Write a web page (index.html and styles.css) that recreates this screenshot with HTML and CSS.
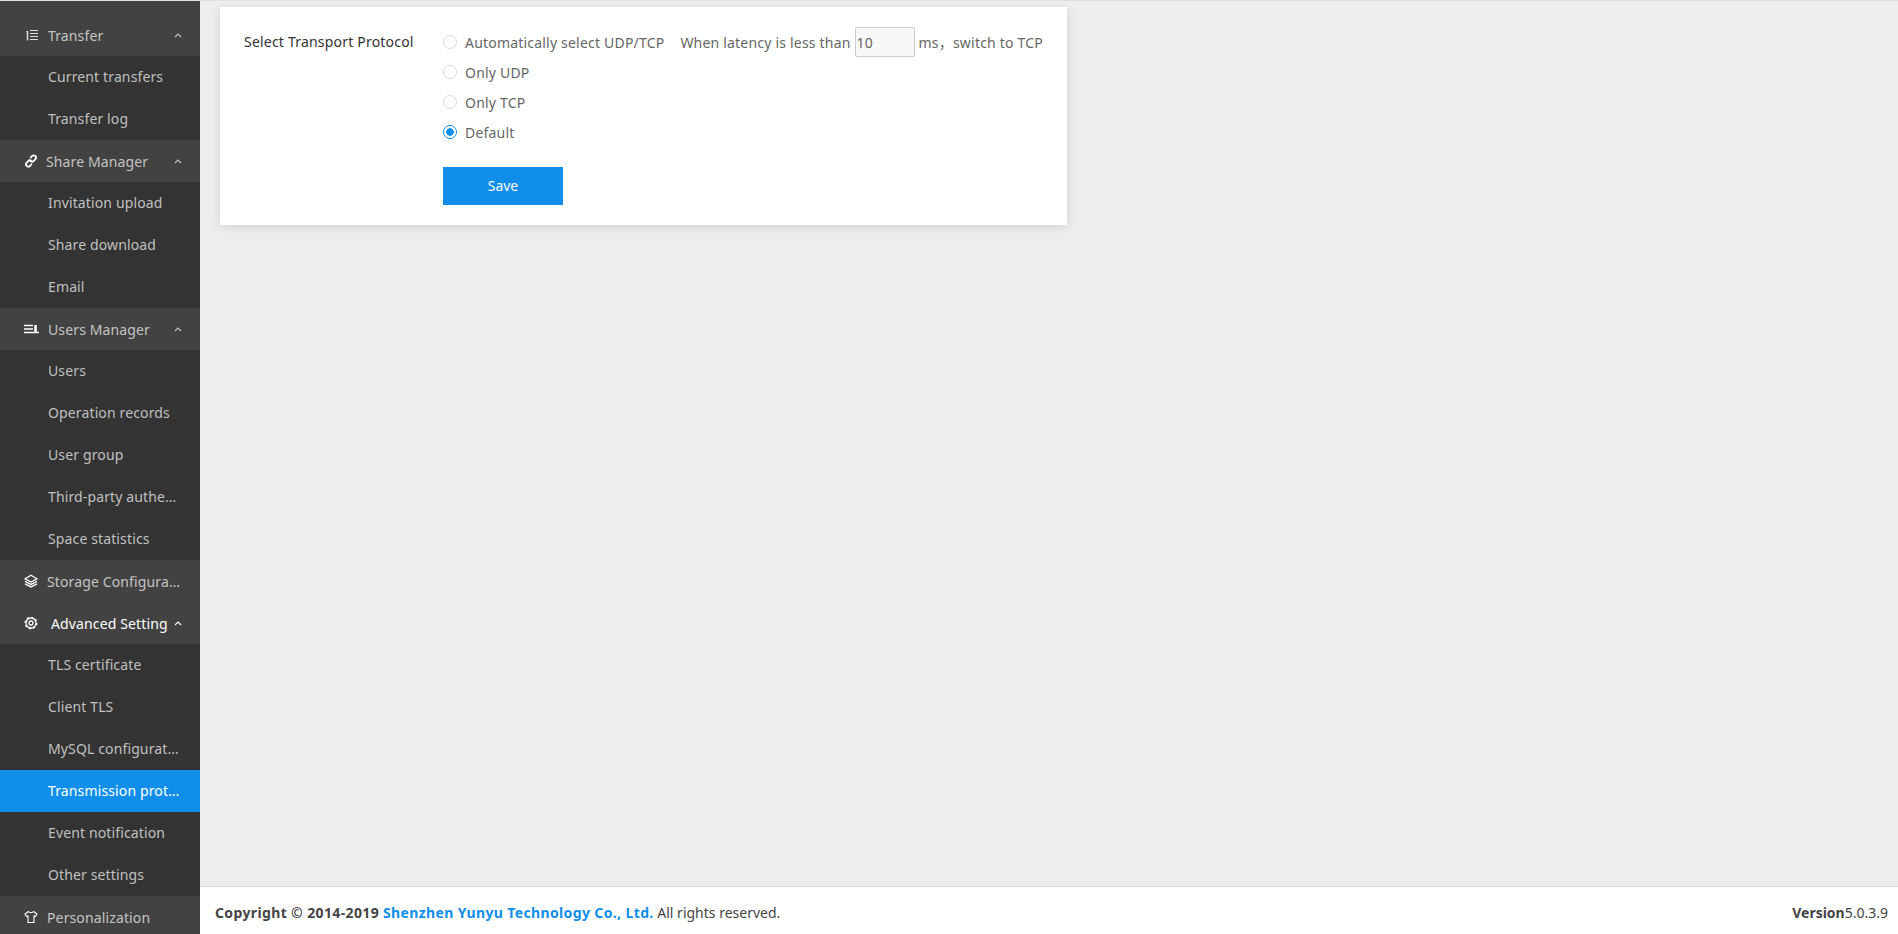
FILE: index.html
```html
<!DOCTYPE html>
<html lang="en">
<head>
<meta charset="utf-8">
<title>Transmission protocol</title>
<link rel="stylesheet" href="styles.css">
</head>
<body>
<div class="topline"></div>
<div class="layout">
  <aside class="sidebar">
    <div class="head first">
      <svg class="icon ic-transfer" viewBox="0 0 12 14"><path d="M1.500 3v9.500" stroke-width="1.500"/><path d="M0 4.500l1.500-1.500M4 2.500h8M4 5.500h8M4 8.500h8M4 11.500h8" stroke-width="1"/></svg>
      <span class="label">Transfer</span><svg class="chev" viewBox="0 0 8 5"><path d="M1 4l3-3 3 3"/></svg>
    </div>
    <a class="item">Current transfers</a>
    <a class="item">Transfer log</a>
    <div class="head">
      <svg class="icon ic-share" viewBox="0 0 14 14"><path d="M6.200 4.200l1.800-2a2.300 2.300 0 0 1 3.800 2.500L9.700 7a2.200 2.200 0 0 1-3.100 0" stroke-width="1.800"/><path d="M7.800 9.800l-1.800 2a2.300 2.300 0 0 1-3.800-2.500L4.300 7a2.200 2.200 0 0 1 3.100 0" stroke-width="1.800"/></svg>
      <span class="label">Share Manager</span><svg class="chev" viewBox="0 0 8 5"><path d="M1 4l3-3 3 3"/></svg>
    </div>
    <a class="item">Invitation upload</a>
    <a class="item">Share download</a>
    <a class="item">Email</a>
    <div class="head">
      <svg class="icon ic-users" viewBox="0 0 16 14"><path d="M0 3.500h9M0 7h9M0 10.500h15" stroke-width="1.600"/><path d="M11.500 3v7" stroke-width="2.600"/></svg>
      <span class="label">Users Manager</span><svg class="chev" viewBox="0 0 8 5"><path d="M1 4l3-3 3 3"/></svg>
    </div>
    <a class="item">Users</a>
    <a class="item">Operation records</a>
    <a class="item">User group</a>
    <a class="item">Third-party authentication</a>
    <a class="item">Space statistics</a>
    <div class="head">
      <svg class="icon ic-storage" viewBox="0 0 14 14"><path d="M7 1.200L13 4.800 7 8 1 4.800z" stroke-width="1.300"/><path d="M1 7.400L7 10.400 13 7.400M1 9.900L7 12.900 13 9.900" stroke-width="1.300"/></svg>
      <span class="label">Storage Configuration</span>
    </div>
    <div class="head open">
      <svg class="icon ic-gear" viewBox="0 0 14 14"><circle cx="7" cy="7" r="5" stroke-width="1.300"/><circle class="teeth" cx="7" cy="7" r="5.900" stroke-width="1.200" pathLength="16"/><circle cx="7" cy="7" r="2" stroke-width="1.300"/></svg>
      <span class="label">Advanced Setting</span><svg class="chev" viewBox="0 0 8 5"><path d="M1 4l3-3 3 3"/></svg>
    </div>
    <a class="item">TLS certificate</a>
    <a class="item">Client TLS</a>
    <a class="item">MySQL configuration</a>
    <a class="item active">Transmission protocol</a>
    <a class="item">Event notification</a>
    <a class="item">Other settings</a>
    <div class="head">
      <svg class="icon ic-tee" viewBox="0 0 14 14"><path d="M4.500 1.500L1 4l1.500 2.500L4 5.800V12.500h6V5.800l1.500.7L13 4 9.500 1.500C8.500 3 5.500 3 4.500 1.500z" stroke-width="1.100" stroke-linejoin="round"/></svg>
      <span class="label">Personalization</span>
    </div>
  </aside>
  <div class="main">
    <div class="content">
      <section class="card">
        <div class="field-label">Select Transport Protocol</div>
        <div class="field">
          <div class="option">
            <span class="radio"></span><span class="option-text">Automatically select UDP/TCP</span>
            <span class="latency">When latency is less than</span>
            <input class="latency-input" type="text" value="10">
            <span class="unit">ms，switch to TCP</span>
          </div>
          <div class="option"><span class="radio"></span><span class="option-text">Only UDP</span></div>
          <div class="option"><span class="radio"></span><span class="option-text">Only TCP</span></div>
          <div class="option"><span class="radio checked"></span><span class="option-text">Default</span></div>
          <button class="save" type="button">Save</button>
        </div>
      </section>
    </div>
    <footer class="footer">
      <div><b class="copy">Copyright © 2014-2019 <span class="brand">Shenzhen Yunyu Technology Co., Ltd.</span></b> All rights reserved.</div>
      <div><b>Version</b>5.0.3.9</div>
    </footer>
  </div>
</div>
</body>
</html>
```
FILE: styles.css
```css
* { box-sizing: border-box; }
html, body { height: 100%; }
body {
  margin: 0;
  overflow: hidden;
  display: flex;
  flex-direction: column;
  font-family: "Noto Sans", "Noto Sans CJK SC", sans-serif;
  font-size: 14px;
  color: #333;
  background: #ededed;
}
.topline { height: 1px; flex: none; background: #dfe0e6; }
.layout { flex: 1; min-height: 0; display: flex; }
.sidebar { width: 200px; flex: none; overflow: hidden; background: #333; letter-spacing: .13px; }
.head {
  height: 42px;
  display: flex;
  align-items: center;
  padding-left: 24px;
  background: #424242;
  color: #c4c4c4;
}
.head.first { height: 55px; padding-top: 13px; }
.head.open { color: #fff; }
.label { flex: 1; min-width: 0; white-space: nowrap; overflow: hidden; text-overflow: ellipsis; padding-right: 17px; }
.head:has(.chev) .label { padding-right: 0; }
.head.open .label { overflow: visible; }
.icon { flex: none; height: 14px; width: 14px; fill: none; stroke: #fff; }
.ic-transfer { width: 12px; margin-left: 2px; margin-right: 10px; stroke: #ddd; }
.ic-share { margin-right: 8px; }
.ic-users { width: 16px; margin-right: 8px; }
.ic-storage { margin-right: 9px; }
.ic-gear { margin-right: 13px; }
.ic-tee { margin-right: 9px; }
.teeth { stroke-dasharray: 1 1; }
.chev { flex: none; width: 8px; height: 5px; margin: 0 18px 0 6px; fill: none; stroke: #c4c4c4; stroke-width: 1.100; }
.head.open .chev { stroke: #fff; }
.item {
  display: block;
  height: 42px;
  line-height: 42px;
  padding: 0 18px 0 48px;
  color: #c0c0c0;
  white-space: nowrap;
  overflow: hidden;
  text-overflow: ellipsis;
}
.item.active { background: #108ee9; color: #fff; }
.main { flex: 1; min-width: 0; display: flex; flex-direction: column; }
.content { flex: 1; padding: 6px 20px 0; }
.card {
  width: 847px;
  height: 218px;
  padding: 24px;
  display: flex;
  background: #fff;
  box-shadow: 0 2px 8px rgba(0, 0, 0, .12);
  letter-spacing: .2px;
}
.field-label { width: 199px; flex: none; line-height: 22px; }
.field { flex: 1; min-width: 0; color: #666; margin-top: -4px; }
.option { height: 30px; display: flex; align-items: center; white-space: nowrap; }
.radio {
  width: 14px;
  height: 14px;
  flex: none;
  margin-right: 8px;
  border: 1px solid #d9d9d9;
  border-radius: 50%;
  background: #fff;
}
.radio.checked { border-color: #108ee9; background: radial-gradient(circle, #108ee9 0 3.500px, #fff 4px); }
.latency { margin-left: 16px; }
.latency-input {
  width: 60px;
  height: 30px;
  margin: 0 4px;
  padding: 0 1px;
  border: 1px solid #ccc;
  border-radius: 2px;
  background: #f8f8f8;
  color: #666;
  font: inherit;
  letter-spacing: inherit;
}
.save {
  display: block;
  width: 120px;
  height: 38px;
  margin-top: 20px;
  padding: 0 0 2px;
  border: 0;
  background: #108ee9;
  color: #fff;
  font: inherit;
}
.footer {
  height: 48px;
  flex: none;
  display: flex;
  align-items: center;
  justify-content: space-between;
  padding: 4px 10px 0 15px;
  background: #fff;
  border-top: 1px solid #d3dae3;
  color: #444;
}
.copy { letter-spacing: .37px; }
.brand { color: #108ee9; }
```
